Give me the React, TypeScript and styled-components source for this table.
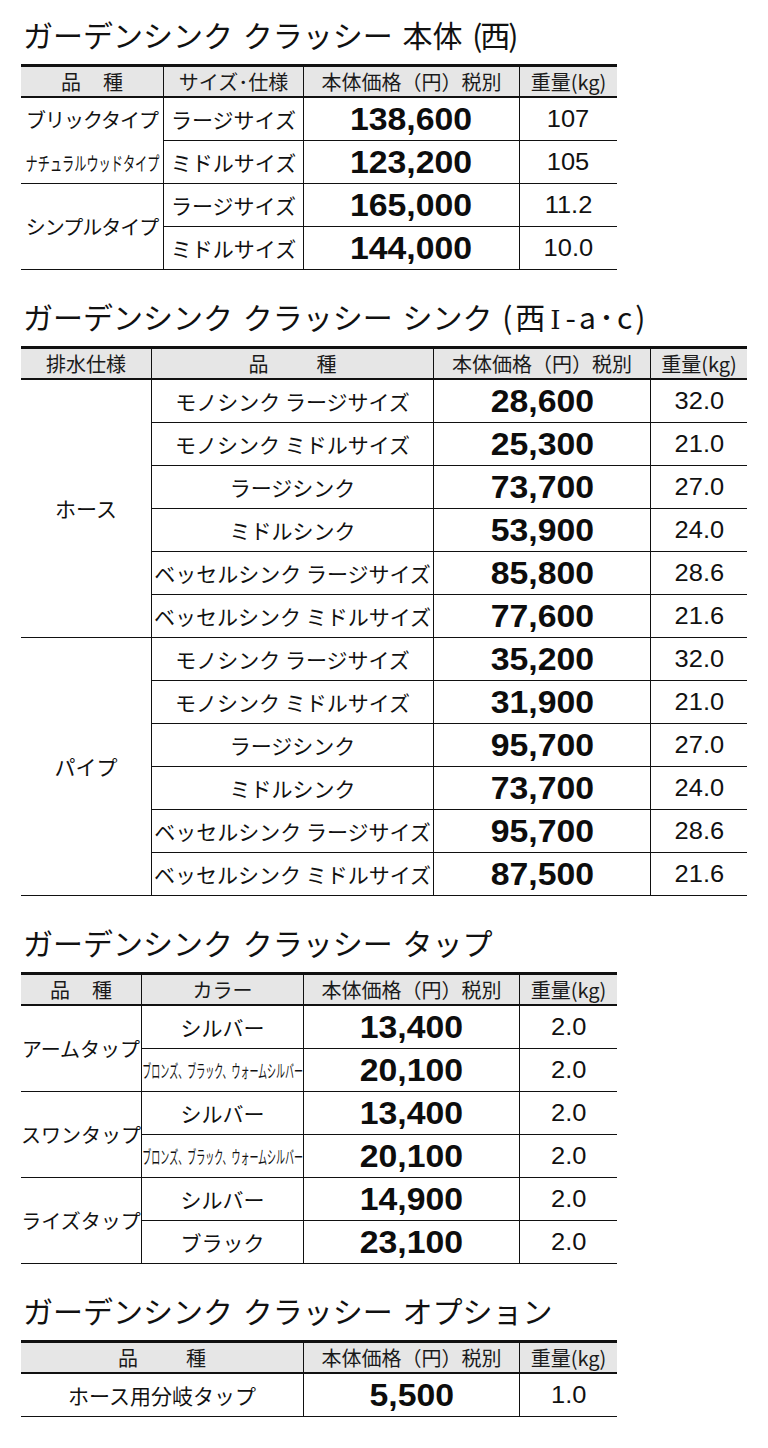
import React from "react";
import styled, { createGlobalStyle } from "styled-components";

const Global = createGlobalStyle`
  html, body { margin: 0; padding: 0; background: #ffffff; }
  body {
    font-family: "Noto Sans CJK JP", "Noto Sans", sans-serif;
    color: #111111;
  }
`;

const Page = styled.main`
  padding: 19px 0 40px 21px;
  display: flex;
  flex-direction: column;
  gap: 31px;
`;

const Section = styled.section`
  display: flex;
  flex-direction: column;
  gap: 15px;
`;

const Title = styled.h2`
  margin: 0;
  padding-left: 2px;
  height: 30px;
  font-size: 30px;
  font-weight: 400;
  line-height: 30px;
  word-spacing: 3px;
  white-space: nowrap;
  color: #111111;
`;

const Paren = styled.span<{ $ls: number }>`
  letter-spacing: ${(p) => p.$ls}px;
`;

const Roman = styled.span`
  font-family: "DejaVu Serif", "Liberation Serif", serif;
  font-size: 26px;
  line-height: 0;
  margin: 0 2px;
`;

const Grid = styled.div<{ $cols: string; $rows: number }>`
  display: grid;
  grid-template-columns: ${(p) => p.$cols};
  grid-template-rows: 31px repeat(${(p) => p.$rows}, 43px);
  border-top: 3px solid #111111;
  width: max-content;
`;

const Head = styled.div<{ $first?: boolean }>`
  background: #e6e6e6;
  border-bottom: 2px solid #111111;
  border-left: ${(p) => (p.$first ? "none" : "1px solid #111111")};
  display: flex;
  align-items: center;
  justify-content: center;
  font-size: 20px;
  line-height: 1;
  white-space: nowrap;
  color: #1a1a1a;
`;

const Cell = styled.div<{ $first?: boolean; $span?: number }>`
  grid-row: span ${(p) => p.$span ?? 1};
  border-bottom: 1px solid #111111;
  border-left: ${(p) => (p.$first ? "none" : "1px solid #111111")};
  display: flex;
  align-items: center;
  justify-content: center;
  font-size: 21px;
  font-weight: 400;
  line-height: 1;
  white-space: nowrap;
  min-width: 0;
`;

const StackCell = styled(Cell)`
  flex-direction: column;
  justify-content: space-around;
`;

const Price = styled.span`
  display: inline-block;
  font-family: "Liberation Sans", Arial, sans-serif;
  font-weight: 700;
  font-size: 31px;
  transform: scaleX(1.09);
  color: #0d0d0d;
`;

const Weight = styled.span`
  display: inline-block;
  font-family: "Liberation Sans", Arial, sans-serif;
  font-weight: 400;
  font-size: 24px;
  transform: scaleX(1.06);
`;

const Squeeze = styled.span<{ $sx: number; $size?: number }>`
  display: inline-block;
  font-size: ${(p) => p.$size ?? 21}px;
  transform: scaleX(${(p) => p.$sx});
  white-space: nowrap;
`;

const Label = styled.span<{ $size?: number; $ls?: number }>`
  font-size: ${(p) => p.$size ?? 21}px;
  letter-spacing: ${(p) => p.$ls ?? 0}px;
`;

const Spaced = styled.span<{ $gap: number }>`
  margin-left: ${(p) => p.$gap}px;
`;

type Item = { name: React.ReactNode; price: string; weight: string };
type Group = { label: React.ReactNode; stacked?: boolean; items: Item[] };

const PriceHead = () => <>本体価格（円）税別</>;
const WeightHead = () => <>重量(kg)</>;

function GroupedTable({
  cols,
  head,
  groups,
}: {
  cols: string;
  head: React.ReactNode[];
  groups: Group[];
}) {
  const rows = groups.reduce((n, g) => n + g.items.length, 0);
  return (
    <Grid $cols={cols} $rows={rows}>
      {head.map((h, i) => (
        <Head key={i} $first={i === 0}>
          {h}
        </Head>
      ))}
      {groups.map((g, gi) => (
        <React.Fragment key={gi}>
          {g.stacked ? (
            <StackCell $first $span={g.items.length}>
              {g.label}
            </StackCell>
          ) : (
            <Cell $first $span={g.items.length}>
              {g.label}
            </Cell>
          )}
          {g.items.map((it, ii) => (
            <React.Fragment key={ii}>
              <Cell>{it.name}</Cell>
              <Cell>
                <Price>{it.price}</Price>
              </Cell>
              <Cell>
                <Weight>{it.weight}</Weight>
              </Cell>
            </React.Fragment>
          ))}
        </React.Fragment>
      ))}
    </Grid>
  );
}

const HinShu = ({ gap }: { gap: number }) => (
  <>
    <span>品</span>
    <Spaced $gap={gap}>種</Spaced>
  </>
);

const Bronze = () => (
  <Squeeze $sx={0.5} $size={18}>
    ブロンズ、ブラック、ウォームシルバー
  </Squeeze>
);

const sinkItems = (p: string[]): Item[] => [
  { name: "モノシンク ラージサイズ", price: p[0], weight: "32.0" },
  { name: "モノシンク ミドルサイズ", price: p[1], weight: "21.0" },
  { name: "ラージシンク", price: p[2], weight: "27.0" },
  { name: "ミドルシンク", price: p[3], weight: "24.0" },
  { name: "ベッセルシンク ラージサイズ", price: p[4], weight: "28.6" },
  { name: "ベッセルシンク ミドルサイズ", price: p[5], weight: "21.6" },
];

export default function App() {
  return (
    <>
      <Global />
      <Page>
        <Section>
          <Title>
            ガーデンシンク クラッシー 本体 <Paren $ls={-2}>(西)</Paren>
          </Title>
          <GroupedTable
            cols="142px 140px 216px 98px"
            head={[
              <HinShu gap={22} />,
              "サイズ･仕様",
              <PriceHead />,
              <WeightHead />,
            ]}
            groups={[
              {
                stacked: true,
                label: (
                  <>
                    <Label $size={20} $ls={-1}>
                      ブリックタイプ
                    </Label>
                    <Squeeze $sx={0.64} $size={19}>
                      ナチュラルウッドタイプ
                    </Squeeze>
                  </>
                ),
                items: [
                  { name: "ラージサイズ", price: "138,600", weight: "107" },
                  { name: "ミドルサイズ", price: "123,200", weight: "105" },
                ],
              },
              {
                label: (
                  <Label $size={20} $ls={-1}>
                    シンプルタイプ
                  </Label>
                ),
                items: [
                  { name: "ラージサイズ", price: "165,000", weight: "11.2" },
                  { name: "ミドルサイズ", price: "144,000", weight: "10.0" },
                ],
              },
            ]}
          />
        </Section>

        <Section>
          <Title>
            ガーデンシンク クラッシー シンク{" "}
            <Paren $ls={3}>
              (西<Roman>Ⅰ</Roman>-a･c)
            </Paren>
          </Title>
          <GroupedTable
            cols="130px 282px 217px 97px"
            head={["排水仕様", <HinShu gap={48} />, <PriceHead />, <WeightHead />]}
            groups={[
              {
                label: "ホース",
                items: sinkItems([
                  "28,600",
                  "25,300",
                  "73,700",
                  "53,900",
                  "85,800",
                  "77,600",
                ]),
              },
              {
                label: "パイプ",
                items: sinkItems([
                  "35,200",
                  "31,900",
                  "95,700",
                  "73,700",
                  "95,700",
                  "87,500",
                ]),
              },
            ]}
          />
        </Section>

        <Section>
          <Title>ガーデンシンク クラッシー タップ</Title>
          <GroupedTable
            cols="120px 162px 216px 98px"
            head={[<HinShu gap={22} />, "カラー", <PriceHead />, <WeightHead />]}
            groups={[
              {
                label: <Label $size={20}>アームタップ</Label>,
                items: [
                  { name: "シルバー", price: "13,400", weight: "2.0" },
                  { name: <Bronze />, price: "20,100", weight: "2.0" },
                ],
              },
              {
                label: <Label $size={20}>スワンタップ</Label>,
                items: [
                  { name: "シルバー", price: "13,400", weight: "2.0" },
                  { name: <Bronze />, price: "20,100", weight: "2.0" },
                ],
              },
              {
                label: <Label $size={20}>ライズタップ</Label>,
                items: [
                  { name: "シルバー", price: "14,900", weight: "2.0" },
                  { name: "ブラック", price: "23,100", weight: "2.0" },
                ],
              },
            ]}
          />
        </Section>

        <Section>
          <Title>ガーデンシンク クラッシー オプション</Title>
          <Grid $cols="282px 216px 98px" $rows={1}>
            <Head $first>
              <HinShu gap={48} />
            </Head>
            <Head>
              <PriceHead />
            </Head>
            <Head>
              <WeightHead />
            </Head>
            <Cell $first>ホース用分岐タップ</Cell>
            <Cell>
              <Price>5,500</Price>
            </Cell>
            <Cell>
              <Weight>1.0</Weight>
            </Cell>
          </Grid>
        </Section>
      </Page>
    </>
  );
}
